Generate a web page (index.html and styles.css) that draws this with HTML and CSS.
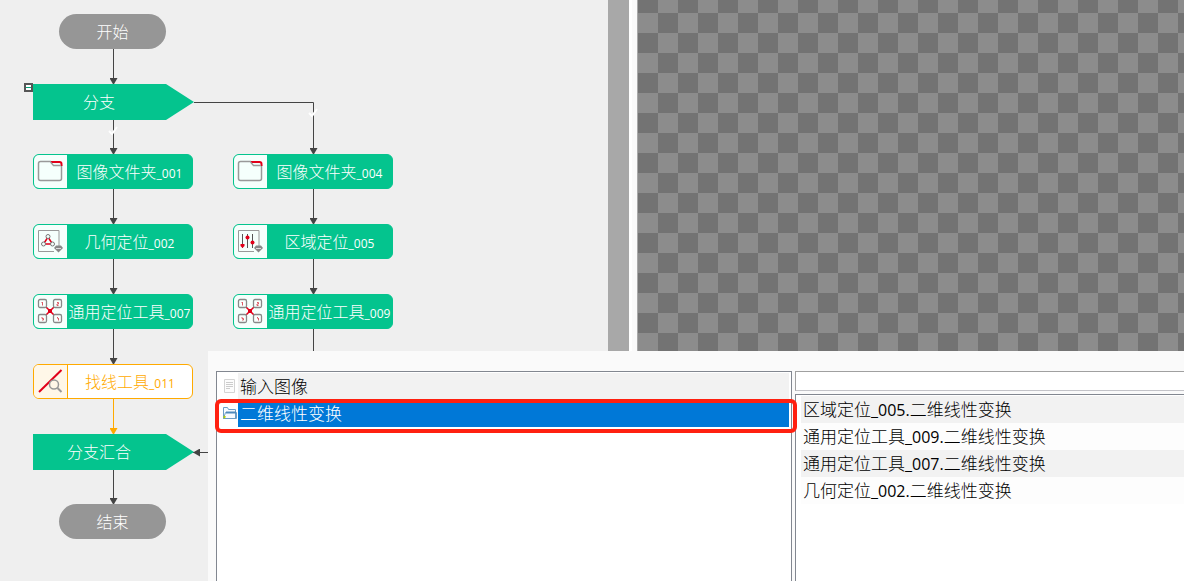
FILE: index.html
```html
<!DOCTYPE html>
<html lang="zh-CN">
<head>
<meta charset="utf-8">
<title>流程编辑</title>
<link rel="stylesheet" href="styles.css">
</head>
<body>
<svg class="sprite" aria-hidden="true">
  <symbol id="i-folder" viewBox="0 0 33 33">
    <path d="M17 6.500H6.500a2 2 0 0 0-2 2v15a2 2 0 0 0 2 2h19a2 2 0 0 0 2-2V10" fill="none" stroke="#999" stroke-width="1.500"/>
    <path d="M17 7h8.500a2 2 0 0 1 2 2v2" fill="none" stroke="#e2001a" stroke-width="2"/>
    <path d="M16.500 7l3 3.500h7.500" fill="none" stroke="#999" stroke-width="1.300"/>
  </symbol>
  <symbol id="i-shape" viewBox="0 0 33 33">
    <path d="M20 26.500H4.500v-21h20.500V21" fill="none" stroke="#999"/>
    <path d="M14 12L9.500 19h9z" fill="none" stroke="#e2001a" stroke-width="1.500"/>
    <g fill="#f5fffc" stroke="#777"><circle cx="14" cy="11.500" r="2"/><circle cx="9.500" cy="19" r="2"/><circle cx="18.500" cy="19" r="2"/></g>
    <path d="M20 23l2-2.500h5l2 2.500-4.500 4.500z" fill="#888"/><path d="M22 23.500h5" stroke="#ddd"/>
  </symbol>
  <symbol id="i-sliders" viewBox="0 0 33 33">
    <path d="M20 26.500H4.500v-21h20.500V21" fill="none" stroke="#999"/>
    <path d="M8.500 9v14M13.500 9v14M18.500 9v14" stroke="#555"/>
    <g fill="#e2001a"><path d="M6.500 19h4v2l-2 2-2-2z"/><circle cx="13.500" cy="12.500" r="2"/><circle cx="18.500" cy="17.500" r="2"/></g>
    <path d="M20 23l2-2.500h5l2 2.500-4.500 4.500z" fill="#888"/><path d="M22 23.500h5" stroke="#ddd"/>
  </symbol>
  <symbol id="i-locate" viewBox="0 0 33 33">
    <path d="M11 11l10 10M21 11L11 21" stroke="#e2001a" stroke-width="1.500"/>
    <path d="M14 14h4v4h-4z" fill="#e2001a"/>
    <g fill="#f8fffd" stroke="#888" stroke-width="1.300"><rect x="4.500" y="4.500" width="8" height="8" rx="1.500"/><rect x="19.500" y="4.500" width="8" height="8" rx="1.500"/><rect x="4.500" y="19.500" width="8" height="8" rx="1.500"/><rect x="19.500" y="19.500" width="8" height="8" rx="1.500"/></g>
    <path d="M8.500 7v3.500M7.500 7.500h1M23 7.500h1.500v1.500H23v1.500h1.500M8 22v1.500h1.500V25H8M23.500 22v1.500M24.500 23v2.500" fill="none" stroke="#dc5964"/>
  </symbol>
  <symbol id="i-line" viewBox="0 0 33 33">
    <path d="M5 27L27.500 5" stroke="#e2001a" stroke-width="2"/>
    <circle cx="20" cy="19.500" r="4.500" fill="#fff7e8" fill-opacity=".5" stroke="#999" stroke-width="1.500"/>
    <path d="M23.500 23l4 4" stroke="#999" stroke-width="2"/>
  </symbol>
</svg>
<main class="app">
  <section class="canvas" aria-label="流程图">
    <svg class="edges" aria-hidden="true">
      <defs>
        <marker id="dark" markerUnits="userSpaceOnUse" markerWidth="8" markerHeight="8" refX="7" refY="4" orient="auto"><path d="M0 0L7 4 0 8z" fill="#444"/></marker>
        <marker id="gold" markerUnits="userSpaceOnUse" markerWidth="8" markerHeight="8" refX="7" refY="4" orient="auto"><path d="M0 0L7 4 0 8z" fill="#ffaa00"/></marker>
      </defs>
      <g class="edge">
        <path d="M113.500 49V85"/><path d="M113.500 120V155"/><path d="M113.500 189V225"/><path d="M113.500 259V295"/><path d="M113.500 329V365"/><path d="M113.500 470V505"/>
        <path d="M194 102.500H313.500V155"/><path d="M313.500 189V225"/><path d="M313.500 259V295"/><path d="M313.500 329V452.500H193"/>
      </g>
      <path class="edge edge-gold" d="M113.500 399V435"/>
      <path class="tick" d="M109 131l3 3 5-7M309 113l3 3 5-7"/>
    </svg>
    <div class="node terminal start">开始</div>
    <button class="fold" aria-label="折叠分支"></button>
    <div class="node branch b1"><span>分支</span></div>
    <div class="node tool c1 r1"><svg class="icon"><use href="#i-folder"/></svg><span class="label">图像文件夹<small>_001</small></span></div>
    <div class="node tool c1 r2"><svg class="icon"><use href="#i-shape"/></svg><span class="label">几何定位<small>_002</small></span></div>
    <div class="node tool c1 r3"><svg class="icon"><use href="#i-locate"/></svg><span class="label">通用定位工具<small>_007</small></span></div>
    <div class="node tool active c1 r4"><svg class="icon"><use href="#i-line"/></svg><span class="label">找线工具<small>_011</small></span></div>
    <div class="node tool c2 r1"><svg class="icon"><use href="#i-folder"/></svg><span class="label">图像文件夹<small>_004</small></span></div>
    <div class="node tool c2 r2"><svg class="icon"><use href="#i-sliders"/></svg><span class="label">区域定位<small>_005</small></span></div>
    <div class="node tool c2 r3"><svg class="icon"><use href="#i-locate"/></svg><span class="label">通用定位工具<small>_009</small></span></div>
    <div class="node branch b2"><span>分支汇合</span></div>
    <div class="node terminal end">结束</div>
  </section>
  <div class="scrollbar"></div>
  <section class="viewer" aria-label="图像视图"></section>
</main>
<section class="dialog" aria-label="输入绑定">
  <ul class="list tree">
    <li><svg class="row-icon" viewBox="0 0 21 27"><path d="M7.500 6.500h10v13h-10z" fill="#fcfcfc" stroke="#d4d4d4"/><path d="M9 9.500h7M9 11.500h7M9 13.500h7M9 15.500h4" stroke="#ccc"/></svg><span>输入图像</span></li>
    <li class="selected"><svg class="row-icon" viewBox="0 0 21 27"><path d="M6.500 18.500v-11h4l1 2h7v9zM6.500 18.500l2-6h11v6z" fill="#f7fbff" stroke="#6c9ec6"/><path d="M9 12.500h10" stroke="#4e8abc" stroke-width="2"/><path d="M7 18l1-2" stroke="#b4d000" stroke-width="2"/></svg><span>二维线性变换</span><i class="highlight"></i></li>
  </ul>
  <div class="sources">
    <input class="search" type="text" aria-label="筛选">
    <ul class="list options">
      <li>区域定位<b>_005.</b>二维线性变换</li>
      <li>通用定位工具<b>_009.</b>二维线性变换</li>
      <li>通用定位工具<b>_007.</b>二维线性变换</li>
      <li>几何定位<b>_002.</b>二维线性变换</li>
    </ul>
  </div>
</section>
</body>
</html>
```
FILE: styles.css
```css
* { box-sizing: border-box; }
body {
  margin: 0;
  height: 100vh;
  overflow: hidden;
  position: relative;
  background: #efefef;
  font-family: "Noto Sans CJK SC", sans-serif;
  font-weight: 300;
}
.sprite { position: absolute; width: 0; height: 0; }
.app { display: flex; height: 100%; }

.canvas { position: relative; flex: 608; background: #efefef; }
.scrollbar { flex: 0 0 21px; background: #a8a8a8; }
.viewer {
  flex: 546;
  margin-left: 8px;
  border-left: 1px solid #a8a8a8;
  background: repeating-conic-gradient(#8c8c8c 0 25%, #737373 0 50%) 0 -7px / 40px 40px;
  box-shadow: -5px 0 #fafafa, -8px 0 #fff;
}

.edges { position: absolute; inset: 0; width: 100%; height: 100%; }
.edge, .edge path { fill: none; stroke: #444; stroke-width: 1; }
.edge path { marker-end: url(#dark); }
.edge-gold { stroke: #ffaa00; marker-end: url(#gold); }
.tick { fill: none; stroke: #fff; stroke-width: 2; }

.node { position: absolute; display: flex; color: #fff; font-size: 16px; line-height: 24px; white-space: nowrap; }
.node small { font: 12px "Open Sans", sans-serif; }
.terminal {
  left: 59px;
  width: 107px;
  height: 35px;
  padding-bottom: 2px;
  align-items: center;
  justify-content: center;
  border-radius: 18px;
  background: #969696;
}
.start { top: 14px; }
.end { top: 504px; }
.branch {
  left: 33px;
  width: 161px;
  height: 36px;
  padding: 0 29px 2px 0;
  align-items: center;
  justify-content: center;
  background: #04c48e;
  clip-path: polygon(0 0, 133px 0, 100% 50%, 133px 100%, 0 100%);
}
.b1 { top: 84px; }
.b2 { top: 434px; }
.fold {
  position: absolute;
  left: 24px;
  top: 83px;
  width: 9px;
  height: 9px;
  padding: 0;
  border: 2px solid #555;
  background: linear-gradient(#fff 2px, #04a47a 2px 3px, #fff 3px);
}
.tool {
  width: 160px;
  height: 35px;
  border: 1px solid #04c48e;
  border-radius: 6px;
  background: #04c48e;
  overflow: hidden;
}
.icon { flex: 0 0 33px; height: 33px; background: #f5fffc; }
.label { flex: 1; display: flex; align-items: baseline; justify-content: center; padding-top: 4px; }
.active { border-color: #ffaa00; background: #fff; color: #ffaa00; }
.active .icon { flex-basis: 34px; background: #fff7e8; border-right: 1px solid #ffaa00; }
.c1 { left: 33px; }
.c2 { left: 233px; }
.r1 { top: 154px; }
.r2 { top: 224px; }
.r3 { top: 294px; }
.r4 { top: 364px; }

.dialog {
  position: absolute;
  left: 208px;
  right: 0;
  top: 351px;
  bottom: 0;
  display: grid;
  grid-template-columns: 576fr 389fr;
  column-gap: 3px;
  padding: 20px 0 0 8px;
  background: #fafafa;
  color: #000;
  font-size: 17px;
  line-height: 25px;
}
.list {
  margin: 0;
  padding: 1px 2px;
  list-style: none;
  border: 1px solid #828790;
  border-bottom: 0;
  background: #fff;
}
.tree { padding-left: 0; }
.tree li { position: relative; display: flex; }
.tree span { flex: 1; padding: 0 0 2px 2px; background: #f2f2f2; }
.row-icon { flex: 0 0 21px; height: 27px; }
.tree .selected span { background: #0078d7; color: #fff; }
.highlight {
  position: absolute;
  inset: -1px -8px -6px -2px;
  border: 4px solid #ff2010;
  border-radius: 6px;
}
.sources { display: flex; flex-direction: column; gap: 3px; min-width: 0; }
.search {
  width: 100%;
  height: 20px;
  padding: 0 4px;
  border: 1px solid #c3c3c8;
  border-top-color: #a0a0a0;
  border-left-color: #a0a0a0;
  border-right: 0;
  background: #fff;
}
.options { flex: 1; border-right: 0; padding: 1px 0 0 5px; }
.options li { padding: 0 0 2px 2px; white-space: nowrap; background: #fdfdfd; }
.options li:nth-child(odd) { background: #f2f2f2; }
.options b { font: 16px "Open Sans", sans-serif; }
```
